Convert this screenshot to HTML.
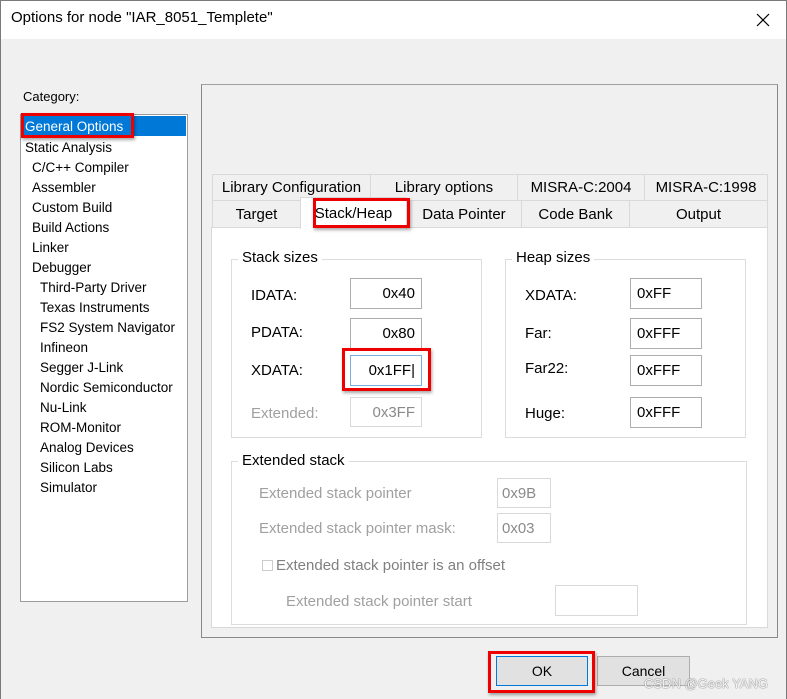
<!DOCTYPE html>
<html><head><meta charset="utf-8"><style>
*{margin:0;padding:0;box-sizing:border-box}
body{width:787px;height:699px;background:#f0f0f0;font-family:"Liberation Sans","Noto Sans CJK SC",sans-serif;font-size:14px;color:#000;position:relative;overflow:hidden}
.a{position:absolute;white-space:nowrap}
.win{position:absolute;left:0;top:0;width:787px;height:699px;border:1px solid #7a7a7a;border-bottom:none}
.title{position:absolute;left:1px;top:1px;width:785px;height:38px;background:#fff}
.box{position:absolute;border:1px solid #adadad;background:#fff}
.tab{position:absolute;background:#f0f0f0;border:1px solid #d9d9d9;text-align:center;line-height:25px;font-size:15px}
.grp{position:absolute;border:1px solid #dcdcdc}
.in{position:absolute;border:1px solid #adadad;background:#fff;height:31px;font-size:15px;line-height:29px;padding:0 6px}
.dis{color:#a0a0a0}
.din{border-color:#d9d9d9;color:#8a8a8a}
.red{position:absolute;border:3px solid #e00;box-shadow:1px 2px 3px rgba(0,0,0,.35)}
</style></head><body>
<div class="win"></div>
<div class="title"></div>
<div class="a" style="left:11px;top:9px;font-size:15px">Options for node "IAR_8051_Templete"</div>
<svg class="a" style="left:755px;top:12px" width="16" height="16"><path d="M2 2L14 14M14 2L2 14" stroke="#000" stroke-width="1.2"/></svg>

<div class="a" style="left:23px;top:89px;font-size:13px">Category:</div>
<div class="box" style="left:20px;top:114px;width:168px;height:488px;border-color:#9c9c9c"></div>
<div class="a" style="left:22px;top:116px;width:164px;height:20px;background:#0078d7"></div>
<div class="a" style="left:25px;top:118px;font-size:13.5px;color:#fff;line-height:17px">General Options</div>
<div class="red" style="left:21px;top:113px;width:113px;height:25px"></div>
<div class="a" style="left:25px;top:138px;font-size:13.5px;line-height:20px">Static Analysis<br><span style="padding-left:7px">C/C++ Compiler</span><br><span style="padding-left:7px">Assembler</span><br><span style="padding-left:7px">Custom Build</span><br><span style="padding-left:7px">Build Actions</span><br><span style="padding-left:7px">Linker</span><br><span style="padding-left:7px">Debugger</span></div>
<div class="a" style="left:40px;top:278px;font-size:13.5px;line-height:20px">Third-Party Driver<br>Texas Instruments<br>FS2 System Navigator<br>Infineon<br>Segger J-Link<br>Nordic Semiconductor<br>Nu-Link<br>ROM-Monitor<br>Analog Devices<br>Silicon Labs<br>Simulator</div>

<div class="a" style="left:201px;top:84px;width:577px;height:554px;border:1px solid #888;border-top-color:#a0a0a0"></div>
<div class="a" style="left:211px;top:227px;width:557px;height:401px;background:#fff;border:1px solid #d9d9d9"></div>

<div class="tab" style="left:212px;top:174px;width:159px;height:27px">Library Configuration</div>
<div class="tab" style="left:370px;top:174px;width:148px;height:27px">Library options</div>
<div class="tab" style="left:517px;top:174px;width:128px;height:27px">MISRA-C:2004</div>
<div class="tab" style="left:644px;top:174px;width:124px;height:27px">MISRA-C:1998</div>
<div class="tab" style="left:212px;top:200px;width:89px;height:28px;line-height:28px">Target</div>
<div class="tab" style="left:300px;top:197px;width:107px;height:32px;background:#fff;border-bottom:none;line-height:32px">Stack/Heap</div>
<div class="tab" style="left:406px;top:200px;width:116px;height:28px;line-height:28px">Data Pointer</div>
<div class="tab" style="left:521px;top:200px;width:109px;height:28px;line-height:28px">Code Bank</div>
<div class="tab" style="left:629px;top:200px;width:139px;height:28px;line-height:28px">Output</div>
<div class="red" style="left:313px;top:198px;width:97px;height:30px"></div>

<div class="grp" style="left:231px;top:259px;width:251px;height:179px"></div>
<div class="a" style="left:238px;top:249px;background:#fff;padding:0 4px;font-size:15px">Stack sizes</div>
<div class="a" style="left:251px;top:287px;font-size:15px">IDATA:</div>
<div class="in" style="left:350px;top:278px;width:72px;text-align:right">0x40</div>
<div class="a" style="left:251px;top:324px;font-size:15px">PDATA:</div>
<div class="in" style="left:350px;top:318px;width:72px;text-align:right">0x80</div>
<div class="a" style="left:251px;top:362px;font-size:15px">XDATA:</div>
<div class="in" style="left:350px;top:355px;width:72px;text-align:right;border-color:#7ab0e0">0x1FF<span style="font-weight:100">|</span></div>
<div class="red" style="left:342px;top:348px;width:89px;height:43px"></div>
<div class="a dis" style="left:251px;top:405px;font-size:15px">Extended:</div>
<div class="in din" style="left:350px;top:397px;width:72px;text-align:right;height:30px">0x3FF</div>

<div class="grp" style="left:505px;top:259px;width:241px;height:179px"></div>
<div class="a" style="left:512px;top:249px;background:#fff;padding:0 4px;font-size:15px">Heap sizes</div>
<div class="a" style="left:525px;top:287px;font-size:15px">XDATA:</div>
<div class="in" style="left:630px;top:278px;width:72px">0xFF</div>
<div class="a" style="left:525px;top:325px;font-size:15px">Far:</div>
<div class="in" style="left:630px;top:318px;width:72px">0xFFF</div>
<div class="a" style="left:525px;top:360px;font-size:15px">Far22:</div>
<div class="in" style="left:630px;top:355px;width:72px">0xFFF</div>
<div class="a" style="left:525px;top:405px;font-size:15px">Huge:</div>
<div class="in" style="left:630px;top:397px;width:72px">0xFFF</div>

<div class="grp" style="left:231px;top:461px;width:516px;height:164px"></div>
<div class="a" style="left:238px;top:452px;background:#fff;padding:0 4px;font-size:15px">Extended stack</div>
<div class="a dis" style="left:259px;top:485px;font-size:15px">Extended stack pointer</div>
<div class="in din" style="left:497px;top:478px;width:54px;height:30px;padding:0 4px">0x9B</div>
<div class="a dis" style="left:259px;top:520px;font-size:15px">Extended stack pointer mask:</div>
<div class="in din" style="left:497px;top:513px;width:54px;height:30px;padding:0 4px">0x03</div>
<div class="a" style="left:262px;top:560px;width:11px;height:11px;border:1px solid #ccc"></div>
<div class="a dis" style="left:276px;top:557px;font-size:15px;color:#808080">Extended stack pointer is an offset</div>
<div class="a dis" style="left:286px;top:593px;font-size:15px">Extended stack pointer start</div>
<div class="in din" style="left:555px;top:585px;width:83px;height:31px"></div>

<div class="a" style="left:496px;top:656px;width:92px;height:30px;background:#e1e1e1;border:1px solid #0078d7;text-align:center;line-height:28px;font-size:14px">OK</div>
<div class="a" style="left:597px;top:656px;width:93px;height:30px;background:#e1e1e1;border:1px solid #adadad;text-align:center;line-height:28px;font-size:14px">Cancel</div>
<div class="red" style="left:488px;top:651px;width:107px;height:42px"></div>
<div class="a" style="left:644px;top:676px;font-size:13px;color:#f4f4f4;text-shadow:0 0 1px #777,0 0 1px #777">CSDN @Geek YANG</div>
</body></html>
